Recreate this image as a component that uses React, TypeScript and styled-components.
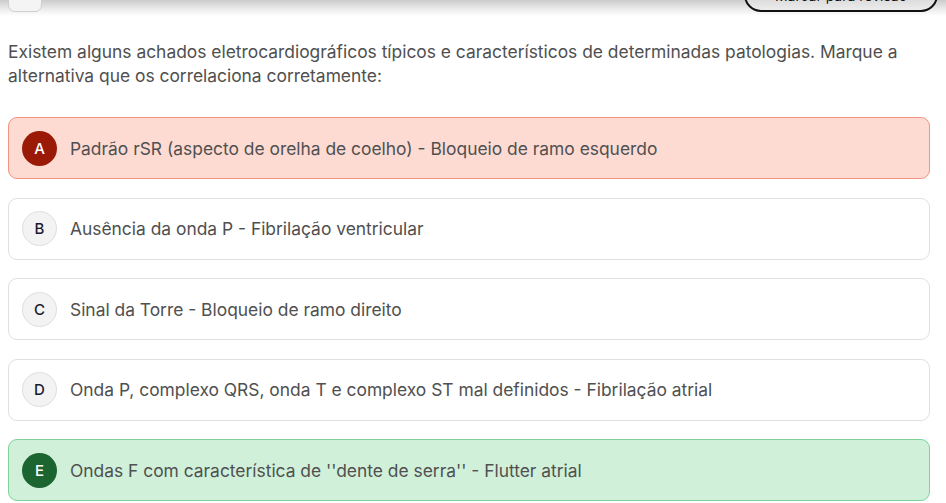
import React from "react";
import styled, { createGlobalStyle } from "styled-components";

const Global = createGlobalStyle`
  html, body { margin: 0; padding: 0; background: #fff; }
  body { font-family: Inter, "Noto Sans", sans-serif; overflow: hidden; }
  * { box-sizing: border-box; }
`;

const Page = styled.div`
  width: 946px;
  height: 503px;
  overflow: hidden;
  display: flex;
  flex-direction: column;
`;

const Header = styled.div`
  margin-top: -22px;
  height: 38px;
  padding: 0 8px;
  display: flex;
  align-items: flex-start;
  justify-content: space-between;
  background: linear-gradient(to bottom, #a9a9a9 0px, #c4c4c4 20px, #e8e8e8 30px, #ffffff 38px);
`;

const NumberBox = styled.div`
  width: 34px;
  height: 34px;
  border: 1px solid #cfcfcf;
  border-radius: 7px;
  background: #f4f4f4;
  display: flex;
  align-items: center;
  justify-content: center;
  font-size: 12px;
  color: #333;
`;

const ReviewButton = styled.button`
  width: 194px;
  height: 34px;
  border: 2px solid #111;
  border-radius: 17px;
  background: linear-gradient(to bottom, #bdbdbd, #ececec);
  font-family: Inter, sans-serif;
  font-size: 14px;
  color: #111;
  padding: 0 16px;
  display: flex;
  align-items: center;
  justify-content: center;
`;

const Content = styled.div`
  padding: 24px 16px 0 8px;
  display: flex;
  flex-direction: column;
`;

const Question = styled.p`
  margin: 0 0 29px 0;
  font-size: 17.4px;
  line-height: 24px;
  color: #505050;
`;

const Options = styled.div`
  display: flex;
  flex-direction: column;
  gap: 18.5px;
`;

type Variant = "wrong" | "right" | "neutral";

const Option = styled.div<{ $v: Variant }>`
  height: 62px;
  border-radius: 9px;
  display: flex;
  align-items: center;
  gap: 13px;
  padding: 0 13px;
  border: 1px solid
    ${(p) => (p.$v === "wrong" ? "#f39483" : p.$v === "right" ? "#7fd39a" : "#e0e0e0")};
  background: ${(p) => (p.$v === "wrong" ? "#fddbd3" : p.$v === "right" ? "#d0f0da" : "#ffffff")};
`;

const Letter = styled.div<{ $v: Variant }>`
  width: 35px;
  height: 35px;
  flex: none;
  border-radius: 50%;
  display: flex;
  align-items: center;
  justify-content: center;
  font-size: 15px;
  font-weight: 500;
  color: ${(p) => (p.$v === "neutral" ? "#1a1a2e" : "#ffffff")};
  background: ${(p) => (p.$v === "wrong" ? "#9a1a07" : p.$v === "right" ? "#1c6430" : "#f3f3f3")};
  border: ${(p) => (p.$v === "neutral" ? "1px solid #dedede" : "none")};
`;

const OptionText = styled.span`
  font-size: 17.4px;
  color: #505050;
`;

const options: { l: string; t: string; v: Variant }[] = [
  { l: "A", t: "Padrão rSR (aspecto de orelha de coelho) - Bloqueio de ramo esquerdo", v: "wrong" },
  { l: "B", t: "Ausência da onda P - Fibrilação ventricular", v: "neutral" },
  { l: "C", t: "Sinal da Torre - Bloqueio de ramo direito", v: "neutral" },
  { l: "D", t: "Onda P, complexo QRS, onda T e complexo ST mal definidos - Fibrilação atrial", v: "neutral" },
  { l: "E", t: "Ondas F com característica de ''dente de serra'' - Flutter atrial", v: "right" },
];

export default function App() {
  return (
    <Page>
      <Global />
      <Header>
        <NumberBox>15</NumberBox>
        <ReviewButton>Marcar para revisão</ReviewButton>
      </Header>
      <Content>
        <Question>
          Existem alguns achados eletrocardiográficos típicos e característicos de determinadas patologias. Marque a
          alternativa que os correlaciona corretamente:
        </Question>
        <Options>
          {options.map((o) => (
            <Option key={o.l} $v={o.v}>
              <Letter $v={o.v}>{o.l}</Letter>
              <OptionText>{o.t}</OptionText>
            </Option>
          ))}
        </Options>
      </Content>
    </Page>
  );
}
